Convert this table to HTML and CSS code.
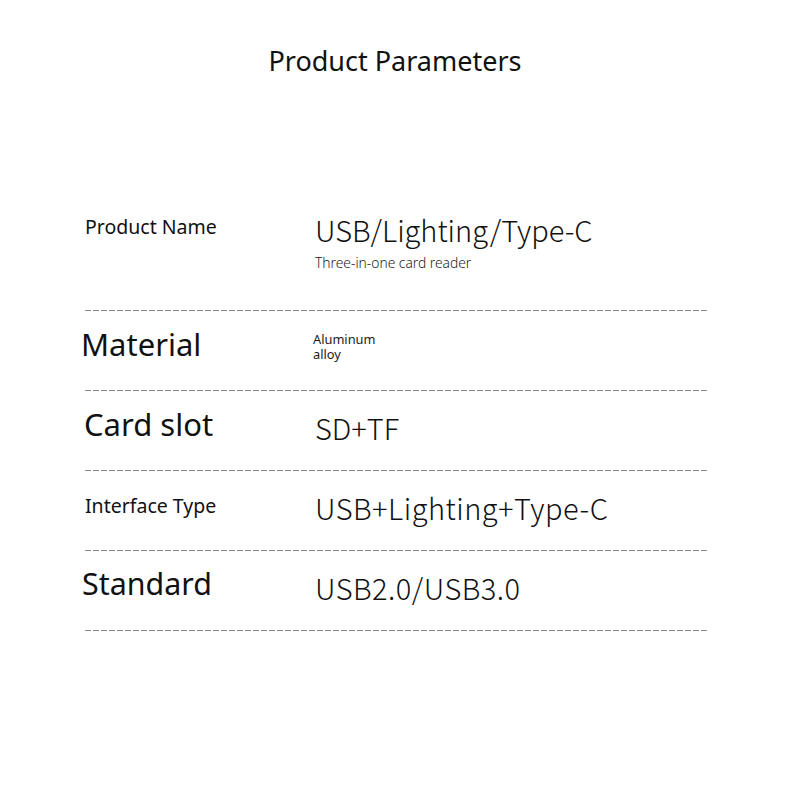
FILE: index.html
```html
<!DOCTYPE html>
<html>
<head>
<meta charset="utf-8">
<link rel="stylesheet" href="styles.css">
</head>
<body>
<h1 class="title">Product Parameters</h1>
<div class="table">
  <div class="row row-first">
    <div class="label label-small">Product Name</div>
    <div class="value">
      <div class="value-big">USB/Lighting/Type-C</div>
      <div class="value-sub">Three-in-one card reader</div>
    </div>
  </div>
  <div class="rule"></div>
  <div class="row">
    <div class="label label-big label-material">Material</div>
    <div class="value value-tiny">Aluminum<br>alloy</div>
  </div>
  <div class="rule"></div>
  <div class="row">
    <div class="label label-big label-card">Card slot</div>
    <div class="value value-big">SD+TF</div>
  </div>
  <div class="rule"></div>
  <div class="row">
    <div class="label label-small">Interface Type</div>
    <div class="value value-big value-wide">USB+Lighting+Type-C</div>
  </div>
  <div class="rule"></div>
  <div class="row">
    <div class="label label-big label-std">Standard</div>
    <div class="value value-big value-wide">USB2.0/USB3.0</div>
  </div>
  <div class="rule"></div>
</div>
</body>
</html>
```
FILE: styles.css
```css
html, body {
  margin: 0;
  padding: 0;
  background: #fff;
}
body {
  font-family: "Noto Sans", "Open Sans", sans-serif;
  color: #111;
  width: 790px;
  height: 800px;
}
.title {
  margin: 0;
  padding-top: 43px;
  font-size: 27px;
  font-weight: 400;
  line-height: 36px;
  text-align: center;
}
.table {
  margin: 121px 82px 0 85px;
}
.row {
  display: grid;
  grid-template-columns: 230px 1fr;
  align-items: center;
  height: 79px;
}
.row-first {
  height: 110px;
  align-items: start;
}
.rule {
  height: 1px;
  background-image: repeating-linear-gradient(to right, #8a8a8a 0 6px, transparent 6px 8px);
}
.label-small {
  font-size: 19.5px;
  line-height: 24px;
  margin-bottom: 10px;
}
.row-first .label-small {
  margin-top: 15px;
  margin-bottom: 0;
}
.label-big {
  font-size: 31px;
  line-height: 40px;
  margin-bottom: 14px;
}
.label-material { margin-left: -4px; }
.label-card { margin-left: -1px; }
.label-std { margin-left: -3px; font-size: 30.4px; }
.value {
  font-family: "Noto Sans CJK SC", "Noto Sans", sans-serif;
  font-weight: 300;
}
.value-big {
  font-family: "Noto Sans CJK SC", "Noto Sans", sans-serif;
  font-weight: 300;
  font-size: 29px;
  line-height: 40px;
  margin-bottom: 7px;
}
.value-wide {
  letter-spacing: 0.5px;
}
.row-first .value-big {
  margin-top: 9px;
  margin-bottom: 0;
}
.value-sub {
  font-family: "Noto Sans", sans-serif;
  font-size: 13.8px;
  line-height: 18px;
  margin-top: 5px;
  color: #222;
}
.value-tiny {
  font-family: "Noto Sans", sans-serif;
  font-weight: 400;
  font-size: 12.8px;
  line-height: 14.5px;
  color: #1a1a1a;
  margin-left: -2px;
  margin-bottom: 8px;
}
```
